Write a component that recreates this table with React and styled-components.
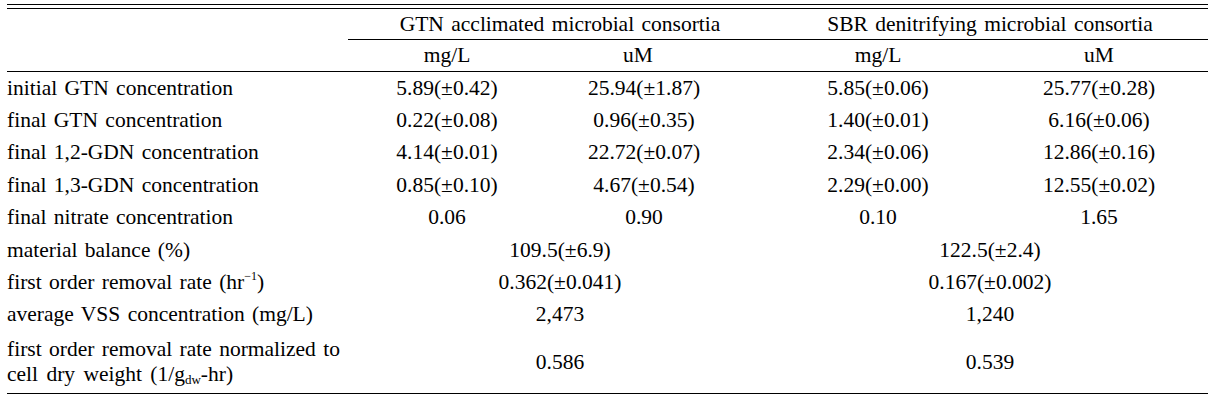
import React from 'react';
import styled, { createGlobalStyle } from 'styled-components';

const GlobalStyle = createGlobalStyle`
  html, body {
    margin: 0;
    padding: 0;
    background: #ffffff;
  }
`;

const Page = styled.div`
  width: 1214px;
  height: 402px;
  box-sizing: border-box;
  padding: 4px 6px 0 7px;
  font-family: "Liberation Serif", "Times New Roman", serif;
  font-size: 21.5px;
  color: #000;
`;

const TableFrame = styled.div`
  border-top: 1px solid #000;
  padding-top: 3px;
`;

const Grid = styled.div`
  display: grid;
  grid-template-columns: 341px 212px 212px 218px 218px;
  grid-template-rows: 31px 32px repeat(8, 32.4px) 62px;
  border-top: 1px solid #000;
  border-bottom: 1px solid #000;
`;

const Cell = styled.div`
  display: flex;
  align-items: center;
  justify-content: ${(p) => (p.$label ? 'flex-start' : 'center')};
  grid-column: ${(p) => p.$span || 'auto'};
  padding-right: ${(p) => (p.$shift ? -2 * p.$shift : 0)}px;
  border-bottom: ${(p) => (p.$rule ? '1px solid #000' : 'none')};
  word-spacing: 2px;
  white-space: nowrap;
  box-sizing: border-box;
  min-width: 0;
`;

const Text = styled.span`
  display: inline-block;
  line-height: 25px;
`;

const LabelLines = styled.div`
  display: flex;
  flex-direction: column;
  line-height: 25px;
`;

const Line = styled.span`
  word-spacing: ${(p) => (p.$tight ? '2px' : '3px')};
`;

const Sup = styled.sup`
  font-size: 12px;
  line-height: 0;
  vertical-align: 9px;
`;

const Sub = styled.sub`
  font-size: 13px;
  line-height: 0;
  vertical-align: -3px;
`;

const colShift = [-7, -22, -3, 0];

const rows = [
  ['initial GTN concentration', ['5.89(±0.42)', '25.94(±1.87)', '5.85(±0.06)', '25.77(±0.28)']],
  ['final GTN concentration', ['0.22(±0.08)', '0.96(±0.35)', '1.40(±0.01)', '6.16(±0.06)']],
  ['final 1,2-GDN concentration', ['4.14(±0.01)', '22.72(±0.07)', '2.34(±0.06)', '12.86(±0.16)']],
  ['final 1,3-GDN concentration', ['0.85(±0.10)', '4.67(±0.54)', '2.29(±0.00)', '12.55(±0.02)']],
  ['final nitrate concentration', ['0.06', '0.90', '0.10', '1.65']],
];

const merged = [
  ['material balance (%)', '109.5(±6.9)', '122.5(±2.4)'],
  [<>first order removal rate (hr<Sup>−1</Sup>)</>, '0.362(±0.041)', '0.167(±0.002)'],
  ['average VSS concentration (mg/L)', '2,473', '1,240'],
];

export default function App() {
  return (
    <Page>
      <GlobalStyle />
      <TableFrame>
        <Grid>
          <Cell $label />
          <Cell $span="2 / span 2" $rule>GTN acclimated microbial consortia</Cell>
          <Cell $span="4 / span 2" $rule>SBR denitrifying microbial consortia</Cell>

          <Cell $label $rule />
          <Cell $rule $shift={colShift[0]}>mg/L</Cell>
          <Cell $rule $shift={colShift[1] - 6}>uM</Cell>
          <Cell $rule $shift={colShift[2]}>mg/L</Cell>
          <Cell $rule $shift={colShift[3]}>uM</Cell>

          {rows.map(([label, vals]) => (
            <React.Fragment key={label}>
              <Cell $label>{label}</Cell>
              {vals.map((v, i) => (
                <Cell key={i} $shift={colShift[i]}>{v}</Cell>
              ))}
            </React.Fragment>
          ))}

          {merged.map(([label, a, b], i) => (
            <React.Fragment key={i}>
              <Cell $label><Text>{label}</Text></Cell>
              <Cell $span="2 / span 2">{a}</Cell>
              <Cell $span="4 / span 2">{b}</Cell>
            </React.Fragment>
          ))}

          <Cell $label>
            <LabelLines>
              <Line $tight>first order removal rate normalized to</Line>
              <Line>
                cell dry weight (1/g<Sub>dw</Sub>-hr)
              </Line>
            </LabelLines>
          </Cell>
          <Cell $span="2 / span 2">0.586</Cell>
          <Cell $span="4 / span 2">0.539</Cell>
        </Grid>
      </TableFrame>
    </Page>
  );
}
